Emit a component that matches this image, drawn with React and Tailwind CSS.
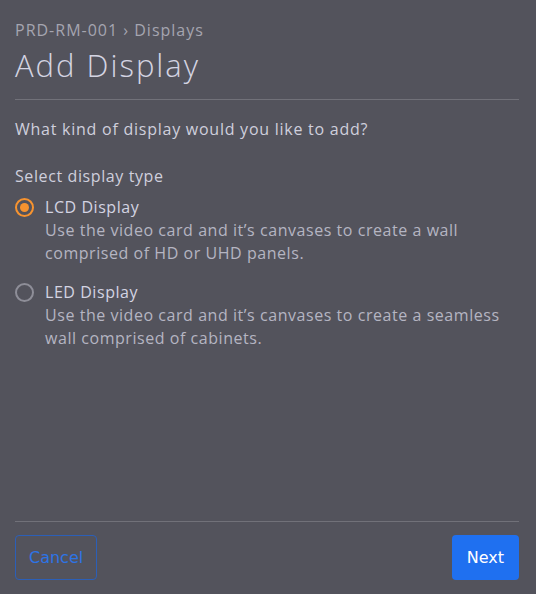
import { useState } from "react";

const options = [
  {
    id: "lcd",
    label: "LCD Display",
    lines: ["Use the video card and it\u2019s canvases to create a wall", "comprised of HD or UHD panels."],
  },
  {
    id: "led",
    label: "LED Display",
    lines: ["Use the video card and it\u2019s canvases to create a seamless", "wall comprised of cabinets."],
  },
];

function Radio({ checked }) {
  return (
    <span
      className={
        "mt-[2px] flex h-[19px] w-[19px] shrink-0 items-center justify-center rounded-full border-2 " +
        (checked ? "border-[#f7932f]" : "border-[#8e8e98]")
      }
    >
      {checked && <span className="h-[9px] w-[9px] rounded-full bg-[#f7932f]" />}
    </span>
  );
}

export default function App() {
  const [type, setType] = useState("lcd");

  return (
    <div className="flex h-screen flex-col bg-[#53535c] pl-[15px] pr-[17px] font-['Open_Sans',sans-serif] text-[#cfcfdc]">
      <div className="pt-[19px] text-[16px] leading-[22px] tracking-[1px] text-[#a5a5b0]">PRD-RM-001 › Displays</div>
      <h1 className="mt-[3px] text-[31px] font-light leading-[42px] tracking-[2px] text-[#d4d4e2]">Add Display</h1>
      <div className="mt-[13px] border-t border-[#717179]" />

      <p className="mt-[18px] text-[16px] leading-[22px] tracking-[0.75px]">What kind of display would you like to add?</p>

      <div className="mt-[25px] text-[16px] leading-[22px] tracking-[0.6px]">Select display type</div>
      <div className="mt-[9px] flex flex-col gap-[16px]">
        {options.map((o) => (
          <label key={o.id} className="flex cursor-pointer gap-[11px]" onClick={() => setType(o.id)}>
            <Radio checked={type === o.id} />
            <div className="text-[16px] leading-[23px] tracking-[0.55px]">
              <div className="text-[#d4d4e2]">{o.label}</div>
              {o.lines.map((l) => (
                <div key={l} className="text-[#b5b5c2]">{l}</div>
              ))}
            </div>
          </label>
        ))}
      </div>

      <div className="mt-auto border-t border-[#717179]" />
      <div className="flex items-center justify-between pb-[14px] pt-[13px] font-['DejaVu_Sans',sans-serif]">
        <button className="h-[45px] rounded-[4px] border border-[#2b5fb8] px-[13px] text-[16px] text-[#2d74e6]">
          Cancel
        </button>
        <button className="h-[45px] rounded-[4px] bg-[#1f70f0] px-[15px] text-[16px] text-white">Next</button>
      </div>
    </div>
  );
}
